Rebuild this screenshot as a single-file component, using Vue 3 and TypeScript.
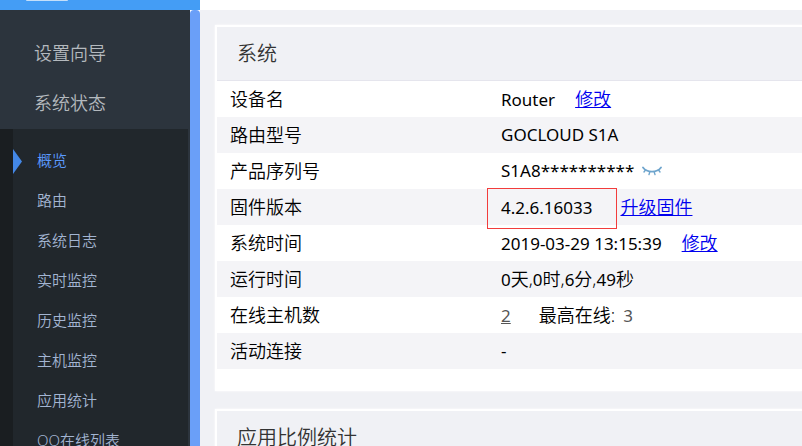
<script setup lang="ts">
interface MenuEntry {
  label: string
  active?: boolean
}

interface TimePart {
  amount: number
  unit: string
}

const mainMenu: string[] = ['设置向导', '系统状态']

const subMenu: MenuEntry[] = [
  { label: '概览', active: true },
  { label: '路由' },
  { label: '系统日志' },
  { label: '实时监控' },
  { label: '历史监控' },
  { label: '主机监控' },
  { label: '应用统计' },
  { label: 'QQ在线列表' },
]

const uptime: TimePart[] = [
  { amount: 0, unit: '天,' },
  { amount: 0, unit: '时,' },
  { amount: 6, unit: '分,' },
  { amount: 49, unit: '秒' },
]
</script>

<template>
  <div class="page">
    <header class="topbar">
      <div class="brand"><span class="brand-mark"></span></div>
    </header>
    <div class="body">
      <aside class="sidebar">
        <nav class="menu">
          <a v-for="item in mainMenu" :key="item" href="#" class="menu-item">{{ item }}</a>
          <div class="submenu">
            <a
              v-for="item in subMenu"
              :key="item.label"
              href="#"
              class="submenu-item"
              :class="{ active: item.active }"
            >
              <svg v-if="item.active" class="pointer" viewBox="0 0 9 25" aria-hidden="true">
                <path d="M0 0 L9 12.5 L0 25 Z" fill="#4387e6" />
              </svg>
              {{ item.label }}
            </a>
          </div>
        </nav>
        <div class="scroll-track"><div class="scroll-thumb"></div></div>
      </aside>
      <main class="content">
        <section class="card">
          <h2 class="card-title">系统</h2>
          <table class="info">
            <tbody>
              <tr>
                <th scope="row">设备名</th>
                <td><span class="value">Router</span><a href="#">修改</a></td>
              </tr>
              <tr>
                <th scope="row">路由型号</th>
                <td><span class="value">GOCLOUD S1A</span></td>
              </tr>
              <tr>
                <th scope="row">产品序列号</th>
                <td>
                  <span class="value near">S1A8**********</span>
                  <button class="eye" type="button">
                    <svg viewBox="0 0 20 12" fill="none" stroke="#6fa5cd" stroke-linecap="round">
                      <path d="M1 2.5 C5 8 15 8 19 2.5" stroke-width="1.8" />
                      <path d="M3.5 5 L2 7 M7.8 7 L7 9.6 M12.2 7 L13 9.6 M16.5 5 L18 7" stroke-width="1.4" />
                    </svg>
                  </button>
                </td>
              </tr>
              <tr>
                <th scope="row">固件版本</th>
                <td class="marked"><span class="value far">4.2.6.16033</span><a href="#">升级固件</a></td>
              </tr>
              <tr>
                <th scope="row">系统时间</th>
                <td><span class="value">2019-03-29 13:15:39</span><a href="#">修改</a></td>
              </tr>
              <tr>
                <th scope="row">运行时间</th>
                <td>
                  <span class="value"><template v-for="part in uptime" :key="part.unit">{{ part.amount }}<span class="unit">{{ part.unit }}</span></template></span>
                </td>
              </tr>
              <tr>
                <th scope="row">在线主机数</th>
                <td>
                  <a href="#" class="count far">2</a><span class="peak">最高在线:</span><span class="count">3</span>
                </td>
              </tr>
              <tr>
                <th scope="row">活动连接</th>
                <td><span class="value">-</span></td>
              </tr>
            </tbody>
          </table>
        </section>
        <section class="card">
          <h2 class="card-title">应用比例统计</h2>
        </section>
      </main>
    </div>
  </div>
</template>

<style>
body {
  margin: 0;
}
</style>

<style scoped>
.page {
  display: flex;
  flex-direction: column;
  height: 100vh;
  overflow: hidden;
  background: #f0f1f5;
  color: #000;
  font-family: 'Noto Sans', 'Noto Sans CJK SC', sans-serif;
  font-size: 17px;
  font-weight: 350;
}

.topbar {
  flex: none;
  height: 10px;
  background: #fff;
}

.brand {
  display: flex;
  box-sizing: border-box;
  width: 200px;
  height: 100%;
  padding-left: 26px;
  background: #449df5;
}

.brand-mark {
  width: 42px;
  height: 1px;
  border-radius: 0 0 4px 4px;
  background: #c4dffa;
}

.body {
  display: flex;
  flex: 1;
  min-height: 0;
}

.sidebar {
  display: flex;
  flex: none;
  width: 200px;
  overflow: hidden;
  background: #2c343d;
}

.menu {
  flex: 1;
  padding-top: 18px;
}

.menu a {
  text-decoration: none;
}

.menu-item {
  display: block;
  padding-left: 34px;
  color: #b4b9be;
  font-size: 18px;
  line-height: 50px;
}

.submenu {
  margin-top: 1px;
  margin-right: 2px;
  padding-top: 11px;
  border-left: 13px solid #1a1e21;
  background: #21272c;
}

.submenu-item {
  position: relative;
  display: block;
  padding-left: 24px;
  color: #a3b5d2;
  font-size: 15px;
  line-height: 40px;
}

.submenu-item.active {
  color: #5c9bff;
}

.pointer {
  position: absolute;
  top: 9px;
  left: 0;
  width: 9px;
  height: 25px;
}

.scroll-track {
  flex: none;
  width: 10px;
  background: #fff;
}

.scroll-thumb {
  height: 100%;
  border-radius: 4px 4px 0 0;
  background: #6a9ff8;
}

.content {
  flex: 1;
  min-width: 0;
  padding: 15px 0 0 15px;
}

.card {
  margin-bottom: 18px;
  padding-bottom: 22px;
  border-top: 2px solid #fff;
  border-left: 2px solid #fff;
  background: #fff;
  box-shadow: 0 0 2px #fff;
}

.card-title {
  margin: 0;
  padding-left: 20px;
  border-bottom: 1px solid #e5e5ed;
  background: #f0f1f5;
  color: #333;
  font-size: 20px;
  font-weight: 350;
  line-height: 53px;
}

.info {
  width: 100%;
  border-collapse: collapse;
  table-layout: fixed;
}

.info tr {
  height: 36px;
}

.info tr:nth-child(even) {
  background: #f4f4f7;
}

.info th,
.info td {
  padding: 0;
  line-height: 24px;
}

.info th {
  width: 271px;
  padding-left: 13px;
  font-size: 18px;
  font-weight: 350;
  text-align: left;
}

.info td {
  white-space: nowrap;
}

.info a {
  color: #00e;
  font-size: 18px;
}

.value {
  margin-right: 20px;
  font-weight: 400;
}

.value.near {
  margin-right: 8px;
}

.value.far,
.info .far {
  margin-right: 28px;
}

.unit,
.peak {
  font-size: 18px;
  font-weight: 350;
}

.info .count {
  color: #555;
  font-size: 17px;
  font-weight: 400;
}

.peak {
  margin-right: 8px;
}

.eye {
  width: 20px;
  height: 12px;
  padding: 0;
  border: 0;
  background: none;
  cursor: pointer;
}

.eye svg {
  display: block;
  width: 20px;
  height: 12px;
}

.marked {
  position: relative;
}

.marked::before {
  position: absolute;
  top: -1px;
  left: -14px;
  box-sizing: border-box;
  width: 130px;
  height: 41px;
  border: 1px solid #f23c3c;
  content: '';
  pointer-events: none;
}
</style>
